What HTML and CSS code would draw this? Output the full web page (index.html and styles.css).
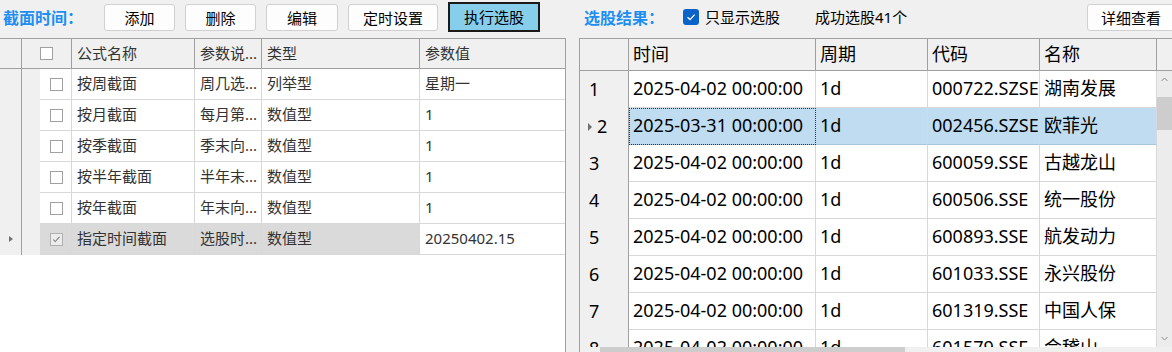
FILE: index.html
```html
<!DOCTYPE html>
<html lang="zh-CN">
<head>
<meta charset="utf-8">
<title>选股</title>
<link rel="stylesheet" href="styles.css">
</head>
<body>
<div class="app">
  <section class="left">
    <div class="toolbar">
      <span class="label lw">截面时间：</span>
      <button class="btn w71">添加</button>
      <button class="btn w71">删除</button>
      <button class="btn w72">编辑</button>
      <button class="btn w90">定时设置</button>
      <button class="btn primary">执行选股</button>
    </div>
    <div class="lgrid">
      <div class="lhead">
        <div class="c"></div>
        <div class="c cbh"><span class="cb"></span></div>
        <div class="c">公式名称</div>
        <div class="c">参数说...</div>
        <div class="c">类型</div>
        <div class="c last">参数值</div>
      </div>
      <div class="lrow">
        <div class="rh"></div><div class="ind"></div>
        <div class="c cbc"><span class="cb"></span></div>
        <div class="c">按周截面</div><div class="c">周几选...</div><div class="c">列举型</div><div class="c last">星期一</div>
      </div>
      <div class="lrow">
        <div class="rh"></div><div class="ind"></div>
        <div class="c cbc"><span class="cb"></span></div>
        <div class="c">按月截面</div><div class="c">每月第...</div><div class="c">数值型</div><div class="c last">1</div>
      </div>
      <div class="lrow">
        <div class="rh"></div><div class="ind"></div>
        <div class="c cbc"><span class="cb"></span></div>
        <div class="c">按季截面</div><div class="c">季末向...</div><div class="c">数值型</div><div class="c last">1</div>
      </div>
      <div class="lrow">
        <div class="rh"></div><div class="ind"></div>
        <div class="c cbc"><span class="cb"></span></div>
        <div class="c">按半年截面</div><div class="c">半年末...</div><div class="c">数值型</div><div class="c last">1</div>
      </div>
      <div class="lrow">
        <div class="rh"></div><div class="ind"></div>
        <div class="c cbc"><span class="cb"></span></div>
        <div class="c">按年截面</div><div class="c">年末向...</div><div class="c">数值型</div><div class="c last">1</div>
      </div>
      <div class="lrow sel">
        <div class="rh"><span class="tri"></span></div><div class="ind"></div>
        <div class="c cbc"><span class="cb on"><svg viewBox="0 0 13 13" width="11" height="11"><path d="M2.5 6.5 L5 9 L10 3.5" fill="none" stroke="#7a7a7a" stroke-width="1.2"/></svg></span></div>
        <div class="c">指定时间截面</div><div class="c">选股时...</div><div class="c">数值型</div><div class="c last cur">20250402.15</div>
      </div>
    </div>
  </section>
  <div class="splitter"></div>
  <section class="right">
    <div class="toolbar rtool">
      <span class="label rw">选股结果：</span>
      <span class="chk"><svg viewBox="0 0 16 16" width="16" height="16"><rect x="0" y="0" width="16" height="16" rx="3" fill="#0a63c9"/><path d="M4.5 8.3 L7 10.6 L11.6 5.6" fill="none" stroke="#fff" stroke-width="1.3"/></svg></span>
      <span class="txt tw">只显示选股</span>
      <span class="txt">成功选股41个</span>
      <button class="btn detail">详细查看</button>
    </div>
    <div class="rgrid">
      <div class="rhead">
        <div class="c"></div>
        <div class="c">时间</div>
        <div class="c">周期</div>
        <div class="c">代码</div>
        <div class="c">名称</div>
        <div class="c last"></div>
      </div>
      <div class="rmain">
        <div class="rrows">
          <div class="rrow"><div class="rh">1</div><div class="c">2025-04-02 00:00:00</div><div class="c">1d</div><div class="c">000722.SZSE</div><div class="c">湖南发展</div></div>
          <div class="rrow sel"><div class="rh"><span class="tri"></span>2</div><div class="c focus">2025-03-31 00:00:00</div><div class="c">1d</div><div class="c">002456.SZSE</div><div class="c">欧菲光</div></div>
          <div class="rrow"><div class="rh">3</div><div class="c">2025-04-02 00:00:00</div><div class="c">1d</div><div class="c">600059.SSE</div><div class="c">古越龙山</div></div>
          <div class="rrow"><div class="rh">4</div><div class="c">2025-04-02 00:00:00</div><div class="c">1d</div><div class="c">600506.SSE</div><div class="c">统一股份</div></div>
          <div class="rrow"><div class="rh">5</div><div class="c">2025-04-02 00:00:00</div><div class="c">1d</div><div class="c">600893.SSE</div><div class="c">航发动力</div></div>
          <div class="rrow"><div class="rh">6</div><div class="c">2025-04-02 00:00:00</div><div class="c">1d</div><div class="c">601033.SSE</div><div class="c">永兴股份</div></div>
          <div class="rrow"><div class="rh">7</div><div class="c">2025-04-02 00:00:00</div><div class="c">1d</div><div class="c">601319.SSE</div><div class="c">中国人保</div></div>
          <div class="rrow"><div class="rh">8</div><div class="c">2025-04-02 00:00:00</div><div class="c">1d</div><div class="c">601579.SSE</div><div class="c">会稽山</div></div>
        </div>
        <div class="vscroll">
          <div class="arrow"><svg viewBox="0 0 15 17" width="15" height="17"><path d="M4.5 10 L7.5 7 L10.5 10" fill="none" stroke="#8a8a8a" stroke-width="1"/></svg></div>
          <div class="vthumb"></div>
          <div class="vfill"></div>
          <div class="arrow"><svg viewBox="0 0 15 17" width="15" height="17"><path d="M4.5 7 L7.5 10 L10.5 7" fill="none" stroke="#8a8a8a" stroke-width="1"/></svg></div>
        </div>
      </div>
      <div class="hscroll"><div class="hthumb"></div></div>
    </div>
  </section>
</div>
</body>
</html>
```

FILE: styles.css
```css
* { box-sizing: border-box; }
html, body { margin: 0; padding: 0; }
body {
  background: #f0f0f0;
  font-family: "Noto Sans", "Noto Sans CJK SC", sans-serif;
  color: #000;
  overflow: hidden;
  width: 1172px;
  height: 352px;
}
.app { display: flex; height: 352px; overflow: hidden; }

.left { width: 566px; flex-shrink: 0; display: flex; flex-direction: column; }
.splitter { width: 13px; flex-shrink: 0; }
.right { flex: 1; display: flex; flex-direction: column; min-width: 0; }

.toolbar { height: 38px; flex-shrink: 0; display: flex; align-items: flex-start; padding-left: 3px; }
.label {
  color: #1e8ff0;
  font-weight: 700;
  font-size: 16px;
  line-height: 20px;
  margin-top: 8px;
  white-space: nowrap;
}
.lw { width: 101px; }
.btn {
  height: 27px;
  margin-top: 4px;
  margin-right: 10px;
  padding: 0;
  background: #fdfdfd;
  border: 1px solid #d0d0d0;
  border-radius: 3px;
  font-family: "Noto Sans", "Noto Sans CJK SC", sans-serif;
  font-size: 15px;
  line-height: 24px;
  color: #000;
}
.w71 { width: 71px; }
.w72 { width: 72px; }
.w90 { width: 90px; }
.btn.primary {
  width: 92px;
  height: 30px;
  margin-top: 2px;
  background: #87ceeb;
  border: 2px solid #1a1a1a;
  border-radius: 0;
  line-height: 25px;
}

/* left grid */
.lgrid {
  flex: 1;
  background: #fff;
  border-top: 1px solid #a0a0a0;
  border-right: 1px solid #a0a0a0;
}
.lhead {
  display: grid;
  grid-template-columns: 22px 50px 123px 67px 158px 145px;
  height: 30px;
}
.lhead .c {
  background: #f0f0f0;
  border-right: 1px solid #a0a0a0;
  border-bottom: 1px solid #a0a0a0;
  font-size: 15px;
  line-height: 28px;
  padding-left: 5px;
  color: #333;
  white-space: nowrap;
  overflow: hidden;
}
.lhead .c.last { border-right: none; }
.lhead .cbh { padding-left: 18px; display: flex; align-items: center; }

.lrow {
  display: grid;
  grid-template-columns: 22px 18px 32px 123px 67px 158px 145px;
  height: 31px;
}
.lrow .rh {
  background: #f0f0f0;
  border-right: 1px solid #a0a0a0;
  position: relative;
}
.lrow .ind { background: #f0f0f0; }
.lrow .c {
  border-right: 1px solid #d8d8d8;
  border-bottom: 1px solid #d8d8d8;
  font-size: 15px;
  line-height: 29px;
  padding-left: 5px;
  color: #333;
  white-space: nowrap;
  overflow: hidden;
}
.lrow .c.last { border-right: none; }
.lrow .cbc { padding-left: 10px; display: flex; align-items: center; }
.lrow.sel .c { background: #dadada; }
.lrow.sel .c.cur { background: #fff; }
.lrow .tri {
  position: absolute;
  left: 9px;
  top: 12px;
  border-left: 4px solid #707070;
  border-top: 3px solid transparent;
  border-bottom: 3px solid transparent;
}

.cb {
  width: 13px;
  height: 13px;
  border: 1px solid #a0a0a0;
  background: #fff;
  display: inline-flex;
  align-items: center;
  justify-content: center;
}
.cb.on { background: #ececec; border-color: #b0b0b0; }

/* right toolbar */
.rtool { padding-left: 5px; }
.rw { width: 99px; }
.chk { width: 16px; height: 16px; margin-top: 9px; margin-right: 6px; display: flex; }
.txt { font-size: 15px; line-height: 20px; margin-top: 7px; white-space: nowrap; }
.tw { width: 110px; }
.btn.detail { width: 88px; margin-left: auto; margin-right: -3px; }

/* right grid */
.rgrid {
  flex: 1;
  display: flex;
  flex-direction: column;
  border-top: 1px solid #a0a0a0;
  border-left: 1px solid #a0a0a0;
  background: #fff;
  overflow: hidden;
  min-height: 0;
}
.rhead {
  display: grid;
  grid-template-columns: 49px 187px 112px 112px 117px 1fr;
  height: 32px;
  flex-shrink: 0;
}
.rhead .c {
  background: #f0f0f0;
  border-right: 1px solid #a0a0a0;
  border-bottom: 1px solid #a0a0a0;
  font-size: 18px;
  line-height: 30px;
  padding-left: 4px;
  white-space: nowrap;
}
.rhead .c.last { border-right: none; }
.rmain { display: flex; height: 276px; flex-shrink: 0; }
.rrows { width: 577px; overflow: hidden; }
.rrow {
  display: grid;
  grid-template-columns: 49px 187px 112px 112px 117px;
  height: 37px;
}
.rrow .rh {
  background: #f0f0f0;
  border-right: 1px solid #a0a0a0;
  font-size: 18px;
  line-height: 37px;
  padding-left: 9px;
  display: flex;
  align-items: center;
}
.rrow .c {
  border-right: 1px solid #d8d8d8;
  border-bottom: 1px solid #d8d8d8;
  font-size: 18px;
  line-height: 35px;
  padding-left: 4px;
  white-space: nowrap;
  overflow: hidden;
}
.rrow.sel .c { background: #bfdcf1; border-bottom-color: #a9c6dd; }
.rrow.sel .c.focus { outline: 1px dotted #333; outline-offset: -1px; }
.rrow.sel .rh { padding-left: 8px; }
.rrow .tri {
  display: inline-block;
  margin-right: 5px;
  border-left: 4px solid #707070;
  border-top: 4px solid transparent;
  border-bottom: 4px solid transparent;
}

.vscroll { width: 15px; flex-shrink: 0; background: #ececec; display: flex; flex-direction: column; }
.vscroll .arrow { height: 17px; display: flex; }
.vthumb { height: 33px; margin-top: 9px; background: #cdcdcd; }
.vfill { flex: 1; }

.hscroll {
  height: 17px;
  flex-shrink: 0;
  background: #f0f0f0;
  padding-left: 20px;
  display: flex;
}
.hthumb { width: 305px; background: #cdcdcd; }
```
